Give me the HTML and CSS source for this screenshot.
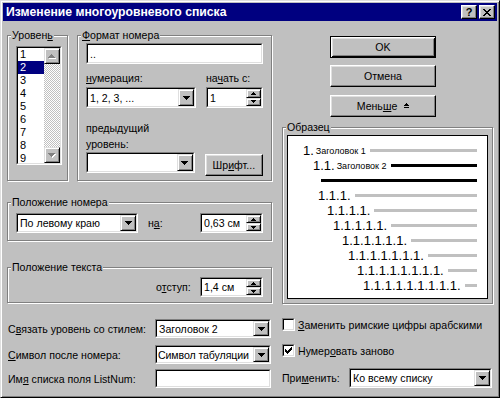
FILE: index.html
```html
<!DOCTYPE html>
<html lang="ru">
<head>
<meta charset="utf-8">
<title>Изменение многоуровневого списка</title>
<link rel="stylesheet" href="styles.css">
</head>
<body>
<div class="window">
  <div class="titlebar">
    <span class="title">Изменение многоуровневого списка</span>
    <div class="tbtns">
      <div class="tbtn">?</div>
      <div class="tbtn">
        <svg width="8" height="7" viewBox="0 0 8 7" shape-rendering="crispEdges"><g fill="#000"><rect x="0" y="0" width="2" height="1"/><rect x="6" y="0" width="2" height="1"/><rect x="1" y="1" width="2" height="1"/><rect x="5" y="1" width="2" height="1"/><rect x="2" y="2" width="4" height="1"/><rect x="3" y="3" width="2" height="1"/><rect x="2" y="4" width="4" height="1"/><rect x="1" y="5" width="2" height="1"/><rect x="5" y="5" width="2" height="1"/><rect x="0" y="6" width="2" height="1"/><rect x="6" y="6" width="2" height="1"/></g></svg>
      </div>
    </div>
  </div>

  <div class="content">
    <div class="top">
      <div class="left">
        <div class="row1">
          <div class="group g-level">
            <span class="legend">Уровен<u>ь</u></span>
            <div class="sunken listbox">
              <div class="sunken-in listbox-in">
                <div class="items">
                  <div class="item">1</div>
                  <div class="item sel">2</div>
                  <div class="item">3</div>
                  <div class="item">4</div>
                  <div class="item">5</div>
                  <div class="item">6</div>
                  <div class="item">7</div>
                  <div class="item">8</div>
                  <div class="item">9</div>
                </div>
                <div class="vscroll">
                  <div class="sb sbtn">
                    <svg width="8" height="5" viewBox="0 0 8 5" shape-rendering="crispEdges"><g fill="#fff"><rect x="4" y="1" width="1" height="1"/><rect x="3" y="2" width="3" height="1"/><rect x="2" y="3" width="5" height="1"/><rect x="1" y="4" width="7" height="1"/></g><g fill="#808080"><rect x="3" y="0" width="1" height="1"/><rect x="2" y="1" width="3" height="1"/><rect x="1" y="2" width="5" height="1"/><rect x="0" y="3" width="7" height="1"/></g></svg>
                  </div>
                  <div class="track"></div>
                  <div class="sb sbtn">
                    <svg width="8" height="5" viewBox="0 0 8 5" shape-rendering="crispEdges"><g fill="#fff"><rect x="1" y="1" width="7" height="1"/><rect x="2" y="2" width="5" height="1"/><rect x="3" y="3" width="3" height="1"/><rect x="4" y="4" width="1" height="1"/></g><g fill="#808080"><rect x="0" y="0" width="7" height="1"/><rect x="1" y="1" width="5" height="1"/><rect x="2" y="2" width="3" height="1"/><rect x="3" y="3" width="1" height="1"/></g></svg>
                  </div>
                </div>
              </div>
            </div>
          </div>

          <div class="group g-format">
            <span class="legend"><u>Ф</u>ормат номера</span>
            <div class="sunken edit-fmt">
              <div class="sunken-in field"><span class="val">..</span></div>
            </div>
            <div class="lblrow">
              <span class="lbl-num"><u>н</u>умерация:</span>
              <span>на<u>ч</u>ать с:</span>
            </div>
            <div class="ctrlrow">
              <div class="sunken combo c-num">
                <div class="sunken-in field">
                  <span class="val">1, 2, 3, ...</span>
                  <div class="sb drop"><svg width="7" height="4" viewBox="0 0 7 4" shape-rendering="crispEdges"><g fill="#000"><rect x="0" y="0" width="7" height="1"/><rect x="1" y="1" width="5" height="1"/><rect x="2" y="2" width="3" height="1"/><rect x="3" y="3" width="1" height="1"/></g></svg></div>
                </div>
              </div>
              <div class="sunken spin s-start">
                <div class="sunken-in field">
                  <span class="val">1</span>
                  <div class="spinbtns">
                    <div class="sb spb"><svg width="5" height="3" viewBox="0 0 5 3" shape-rendering="crispEdges"><g fill="#000"><rect x="2" y="0" width="1" height="1"/><rect x="1" y="1" width="3" height="1"/><rect x="0" y="2" width="5" height="1"/></g></svg></div>
                    <div class="sb spb"><svg width="5" height="3" viewBox="0 0 5 3" shape-rendering="crispEdges"><g fill="#000"><rect x="0" y="0" width="5" height="1"/><rect x="1" y="1" width="3" height="1"/><rect x="2" y="2" width="1" height="1"/></g></svg></div>
                  </div>
                </div>
              </div>
            </div>
            <div class="prevrow">
              <div class="prevcol">
                <div class="lbl2">предыдущий<br>уровень:</div>
                <div class="sunken combo c-prev">
                  <div class="sunken-in field">
                    <span class="val"></span>
                    <div class="sb drop"><svg width="7" height="4" viewBox="0 0 7 4" shape-rendering="crispEdges"><g fill="#000"><rect x="0" y="0" width="7" height="1"/><rect x="1" y="1" width="5" height="1"/><rect x="2" y="2" width="3" height="1"/><rect x="3" y="3" width="1" height="1"/></g></svg></div>
                  </div>
                </div>
              </div>
              <div class="btn b-font">Шр<u>и</u>фт...</div>
            </div>
          </div>
        </div>

        <div class="group g-numpos">
          <span class="legend">Положение номера</span>
          <div class="sunken combo c-align">
            <div class="sunken-in field">
              <span class="val">По левому краю</span>
              <div class="sb drop"><svg width="7" height="4" viewBox="0 0 7 4" shape-rendering="crispEdges"><g fill="#000"><rect x="0" y="0" width="7" height="1"/><rect x="1" y="1" width="5" height="1"/><rect x="2" y="2" width="3" height="1"/><rect x="3" y="3" width="1" height="1"/></g></svg></div>
            </div>
          </div>
          <span class="lbl-at">н<u>а</u>:</span>
          <div class="sunken spin s-pos">
            <div class="sunken-in field">
              <span class="val">0,63 см</span>
              <div class="spinbtns">
                <div class="sb spb"><svg width="5" height="3" viewBox="0 0 5 3" shape-rendering="crispEdges"><g fill="#000"><rect x="2" y="0" width="1" height="1"/><rect x="1" y="1" width="3" height="1"/><rect x="0" y="2" width="5" height="1"/></g></svg></div>
                <div class="sb spb"><svg width="5" height="3" viewBox="0 0 5 3" shape-rendering="crispEdges"><g fill="#000"><rect x="0" y="0" width="5" height="1"/><rect x="1" y="1" width="3" height="1"/><rect x="2" y="2" width="1" height="1"/></g></svg></div>
              </div>
            </div>
          </div>
        </div>

        <div class="group g-textpos">
          <span class="legend">Положение текста</span>
          <span class="lbl-indent">о<u>т</u>ступ:</span>
          <div class="sunken spin s-pos">
            <div class="sunken-in field">
              <span class="val">1,4 см</span>
              <div class="spinbtns">
                <div class="sb spb"><svg width="5" height="3" viewBox="0 0 5 3" shape-rendering="crispEdges"><g fill="#000"><rect x="2" y="0" width="1" height="1"/><rect x="1" y="1" width="3" height="1"/><rect x="0" y="2" width="5" height="1"/></g></svg></div>
                <div class="sb spb"><svg width="5" height="3" viewBox="0 0 5 3" shape-rendering="crispEdges"><g fill="#000"><rect x="0" y="0" width="5" height="1"/><rect x="1" y="1" width="3" height="1"/><rect x="2" y="2" width="1" height="1"/></g></svg></div>
              </div>
            </div>
          </div>
        </div>
      </div>

      <div class="right">
        <div class="btns">
          <div class="btn b-main default">OK</div>
          <div class="btn b-main b-cancel">Отмена</div>
          <div class="btn b-main b-less">Мень<u>ш</u>е
            <svg class="less-ic" width="5" height="6" viewBox="0 0 5 6" shape-rendering="crispEdges"><g fill="#000"><rect x="2" y="0" width="1" height="1"/><rect x="1" y="1" width="3" height="1"/><rect x="0" y="2" width="5" height="1"/><rect x="0" y="4" width="5" height="1"/></g></svg>
          </div>
        </div>
        <div class="group g-sample">
          <span class="legend">Образец</span>
          <div class="preview">
            <div class="prow r1"><span class="num">1.</span><span class="sm">Заголовок 1</span><i class="ln"></i></div>
            <div class="prow r2"><span class="num">1.1.</span><span class="sm">Заголовок 2</span><i class="ln blk"></i></div>
            <div class="prow r3"><i class="ln blk"></i></div>
            <div class="prow r4"><span class="num">1.1.1.</span><i class="ln"></i></div>
            <div class="prow r5"><span class="num">1.1.1.1.</span><i class="ln"></i></div>
            <div class="prow r6"><span class="num">1.1.1.1.1.</span><i class="ln"></i></div>
            <div class="prow r7"><span class="num">1.1.1.1.1.1.</span><i class="ln"></i></div>
            <div class="prow r8"><span class="num">1.1.1.1.1.1.1.</span><i class="ln"></i></div>
            <div class="prow r9"><span class="num">1.1.1.1.1.1.1.1.</span><i class="ln"></i></div>
            <div class="prow r10"><span class="num">1.1.1.1.1.1.1.1.1.</span><i class="ln"></i></div>
          </div>
        </div>
      </div>
    </div>

    <div class="bottom">
      <div class="frow">
        <span class="flbl">С<u>в</u>язать уровень со стилем:</span>
        <div class="sunken combo c-bot">
          <div class="sunken-in field">
            <span class="val">Заголовок 2</span>
            <div class="sb drop"><svg width="7" height="4" viewBox="0 0 7 4" shape-rendering="crispEdges"><g fill="#000"><rect x="0" y="0" width="7" height="1"/><rect x="1" y="1" width="5" height="1"/><rect x="2" y="2" width="3" height="1"/><rect x="3" y="3" width="1" height="1"/></g></svg></div>
          </div>
        </div>
      </div>
      <div class="chkrow">
        <div class="sunken chk"><div class="sunken-in chk-in"></div></div>
        <span><u>З</u>аменить римские цифры арабскими</span>
      </div>

      <div class="frow">
        <span class="flbl"><u>С</u>имвол после номера:</span>
        <div class="sunken combo c-bot">
          <div class="sunken-in field">
            <span class="val tight">Символ табуляции</span>
            <div class="sb drop"><svg width="7" height="4" viewBox="0 0 7 4" shape-rendering="crispEdges"><g fill="#000"><rect x="0" y="0" width="7" height="1"/><rect x="1" y="1" width="5" height="1"/><rect x="2" y="2" width="3" height="1"/><rect x="3" y="3" width="1" height="1"/></g></svg></div>
          </div>
        </div>
      </div>
      <div class="chkrow">
        <div class="sunken chk"><div class="sunken-in chk-in">
          <svg width="7" height="7" viewBox="0 0 7 7" shape-rendering="crispEdges"><g fill="#000"><rect x="6" y="0" width="1" height="1"/><rect x="5" y="1" width="2" height="1"/><rect x="0" y="2" width="1" height="1"/><rect x="4" y="2" width="3" height="1"/><rect x="0" y="3" width="2" height="1"/><rect x="3" y="3" width="3" height="1"/><rect x="0" y="4" width="5" height="1"/><rect x="1" y="5" width="3" height="1"/><rect x="2" y="6" width="1" height="1"/></g></svg>
        </div></div>
        <span>Нумер<u>о</u>вать заново</span>
      </div>

      <div class="frow">
        <span class="flbl">Им<u>я</u> списка поля ListNum:</span>
        <div class="sunken combo c-bot">
          <div class="sunken-in field"></div>
        </div>
      </div>
      <div class="applyrow">
        <span>При<u>м</u>енить:</span>
        <div class="sunken combo c-apply">
          <div class="sunken-in field">
            <span class="val">Ко всему списку</span>
            <div class="sb drop"><svg width="7" height="4" viewBox="0 0 7 4" shape-rendering="crispEdges"><g fill="#000"><rect x="0" y="0" width="7" height="1"/><rect x="1" y="1" width="5" height="1"/><rect x="2" y="2" width="3" height="1"/><rect x="3" y="3" width="1" height="1"/></g></svg></div>
          </div>
        </div>
      </div>
    </div>
  </div>
</div>
</body>
</html>
```
FILE: styles.css
```css
* { box-sizing: border-box; }
body {
  margin: 0;
  background: #c0c0c0;
  font-family: "Liberation Sans", Arial, sans-serif;
  font-size: 10.6px;
  color: #000;
}
u { text-underline-offset: 1px; }

.window {
  width: 500px;
  height: 398px;
  border: 1px solid;
  border-color: #dfdfdf #000 #000 #dfdfdf;
  box-shadow: inset 1px 1px #fff, inset -1px -1px #808080;
  padding: 2px;
  background: #c0c0c0;
  overflow: hidden;
}

.titlebar {
  height: 18px;
  background: #000080;
  color: #fff;
  display: flex;
  align-items: center;
  justify-content: space-between;
  padding: 0 2px 0 3px;
}
.title { font-weight: bold; font-size: 12.2px; }
.tbtns { display: flex; gap: 2px; }
.tbtn {
  width: 16px;
  height: 14px;
  background: #c0c0c0;
  border: 1px solid;
  border-color: #fff #000 #000 #fff;
  box-shadow: inset -1px -1px #808080, inset 1px 1px #dfdfdf;
  display: flex;
  align-items: center;
  justify-content: center;
  color: #000;
  font-weight: bold;
  font-size: 11px;
  line-height: 1;
}

.content { padding: 14px 0 0 4px; }

.top { display: flex; gap: 10px; height: 269px; }
.left { width: 265px; display: flex; flex-direction: column; }
.row1 { display: flex; gap: 9px; height: 146px; }

.group {
  position: relative;
  border: 1px solid #808080;
  box-shadow: inset 1px 1px #fff, 1px 1px #fff;
}
.legend {
  position: absolute;
  top: -7px;
  left: 3px;
  padding: 0 1px;
  background: #c0c0c0;
  line-height: 13px;
  white-space: nowrap;
}

/* sunken 2px frames */
.sunken {
  border: 1px solid;
  border-color: #808080 #fff #fff #808080;
}
.sunken-in {
  height: 100%;
  border: 1px solid;
  border-color: #000 #dfdfdf #dfdfdf #000;
  background: #fff;
}
.field { display: flex; align-items: center; }
.field .val { flex: 1; padding-left: 2px; white-space: nowrap; overflow: hidden; }
.field .val.tight { padding-left: 1px; letter-spacing: -0.1px; }

/* small raised (scroll / drop buttons) */
.sb {
  background: #c0c0c0;
  border: 1px solid;
  border-color: #dfdfdf #000 #000 #dfdfdf;
  box-shadow: inset 1px 1px #fff, inset -1px -1px #808080;
  display: flex;
  align-items: center;
  justify-content: center;
}
.drop { width: 16px; height: 100%; flex: none; }
.spinbtns { width: 15px; height: 100%; display: flex; flex-direction: column; flex: none; }
.spb { flex: 1; }

/* level list */
.g-level { width: 61px; padding: 10px 0 0 8px; }
.listbox { width: 46px; height: 119px; }
.listbox-in { display: flex; }
.items { flex: 1; overflow: hidden; }
.item { height: 13px; line-height: 13px; padding-left: 2px; font-size: 11px; }
.item.sel { background: #000080; color: #fff; }
.vscroll { width: 16px; display: flex; flex-direction: column; }
.sbtn { width: 16px; height: 16px; }
.track {
  flex: 1;
  background: repeating-conic-gradient(#fff 0% 25%, #c0c0c0 0% 50%) 0 0 / 2px 2px;
}

/* format group */
.g-format { width: 195px; padding: 7px 8px 0 8px; }
.edit-fmt { height: 21px; }
.lblrow { display: flex; margin-top: 8px; line-height: 13px; }
.lbl-num { width: 120px; }
.ctrlrow { display: flex; gap: 10px; margin-top: 2px; }
.c-num { width: 110px; height: 21px; }
.s-start { width: 57px; height: 21px; }
.prevrow { display: flex; align-items: flex-end; margin-top: 12px; }
.prevcol { width: 110px; }
.lbl2 { line-height: 16px; }
.c-prev { height: 21px; }

/* buttons */
.btn {
  background: #c0c0c0;
  border: 1px solid;
  border-color: #fff #000 #000 #fff;
  box-shadow: inset -1px -1px #808080, inset 1px 1px #dfdfdf;
  display: flex;
  align-items: center;
  justify-content: center;
  white-space: nowrap;
}
.btn.default {
  border-color: #000;
  box-shadow: inset 1px 1px #fff, inset -1px -1px #000, inset 2px 2px #dfdfdf, inset -2px -2px #808080;
}
.b-font { width: 59px; height: 22px; margin-left: 10px; margin-bottom: -3px; }

/* number position */
.g-numpos { margin-top: 21px; height: 39px; padding: 10px 8px 0 8px; display: flex; align-items: flex-start; }
.c-align { width: 122px; height: 20px; }
.lbl-at { margin-left: 10px; line-height: 20px; }
.s-pos { width: 63px; height: 20px; margin-left: auto; }

.g-textpos { margin-top: 26px; height: 36px; padding: 9px 8px 0 8px; display: flex; align-items: flex-start; }
.lbl-indent { margin-left: 140px; line-height: 20px; }

/* right column */
.right { width: 211px; display: flex; flex-direction: column; }
.btns { margin: 1px 0 0 48px; width: 106px; display: flex; flex-direction: column; }
.b-main { height: 22px; }
.b-cancel { margin-top: 7px; }
.b-less { margin-top: 8px; }
.less-ic { margin-left: 7px; }

.g-sample { margin-top: 10px; height: 177px; padding: 7px 4px 0 4px; }
.preview {
  height: 164px;
  background: #fff;
  border: 1px solid #000;
  padding: 7px 10px 0 0;
}
.prow { display: flex; align-items: center; height: 15px; white-space: nowrap; }
.num { font-size: 13px; line-height: 15px; }
.sm { font-size: 9px; margin-left: 2px; }
.ln { flex: 1; height: 3px; background: #c0c0c0; margin-left: 4px; }
.ln.blk { background: #000; }
.r1 { margin-left: 15px; }
.r2 { margin-left: 25px; }
.r3 { margin-left: 29px; }
.r3 .ln { margin-left: 4px; }
.r4 { margin-left: 30px; }
.r5 { margin-left: 39px; }
.r6 { margin-left: 45px; }
.r7 { margin-left: 54px; }
.r8 { margin-left: 60px; }
.r9 { margin-left: 69px; }
.r10 { margin-left: 75px; }

/* bottom rows */
.bottom {
  display: grid;
  grid-template-columns: 265px 211px;
  column-gap: 10px;
  grid-template-rows: 26px 24px 19px;
  margin-top: 15px;
}
.frow { display: flex; align-items: center; height: 19px; }
.flbl { padding-left: 1px; white-space: nowrap; }
.c-bot { width: 116px; height: 19px; margin-left: auto; margin-right: 1px; }
.chkrow { display: flex; align-items: center; gap: 3px; margin-top: -1px; height: 13px; white-space: nowrap; }
.chk { width: 13px; height: 13px; }
.chk-in { display: flex; align-items: center; justify-content: center; }
.applyrow { display: flex; align-items: center; margin-top: -1px; height: 20px; white-space: nowrap; }
.c-apply { width: 143px; height: 20px; margin-left: auto; margin-right: 1px; }
```
